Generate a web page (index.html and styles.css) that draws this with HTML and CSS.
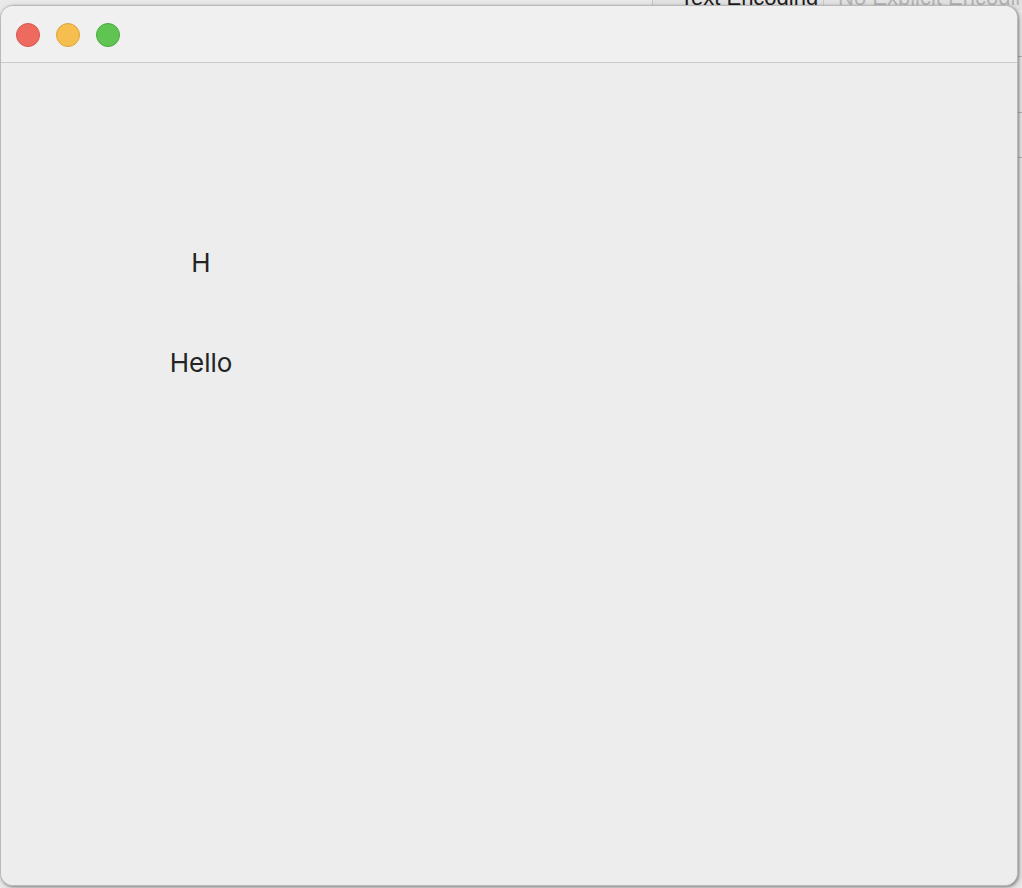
FILE: index.html
```html
<!DOCTYPE html>
<html>
<head>
<meta charset="utf-8">
<link rel="stylesheet" href="styles.css">
</head>
<body>
<div class="desktop">
  <div class="back-window">
    <div class="back-header">
      <span class="back-key">Text Encoding</span>
      <span class="back-sep"></span>
      <span class="back-val">No Explicit Encoding</span>
    </div>
    <div class="back-row r1"></div>
    <div class="back-row r2"></div>
    <div class="back-row r3"></div>
  </div>
  <div class="window">
    <div class="titlebar">
      <span class="light red"></span>
      <span class="light yellow"></span>
      <span class="light green"></span>
    </div>
    <div class="content">
      <div class="column">
        <div class="label">H</div>
        <div class="label">Hello</div>
      </div>
    </div>
  </div>
</div>
</body>
</html>
```

FILE: styles.css
```css
html, body {
  margin: 0;
  padding: 0;
}
body {
  width: 1022px;
  height: 888px;
  overflow: hidden;
  background: #dcdcdc;
  font-family: Inter, "Liberation Sans", sans-serif;
}
.desktop {
  position: relative;
  width: 1022px;
  height: 888px;
  overflow: hidden;
  background: #e9e9e9;
}
.back-window {
  position: absolute;
  left: 652px;
  top: -14px;
  width: 370px;
  height: 300px;
  overflow: hidden;
  background: #ececec;
  border-left: 1px solid #c4c4c4;
}
.back-header {
  display: flex;
  align-items: center;
  height: 24px;
  padding-left: 27px;
  font-family: "Liberation Sans", Arial, sans-serif;
  font-size: 22px;
  white-space: nowrap;
  background: #e2e2e2;
}
.back-key {
  flex: none;
  color: #1e1e1e;
  width: 143px;
}
.back-sep {
  flex: none;
  width: 1px;
  height: 24px;
  background: #c8c8c8;
  margin-right: 14px;
}
.back-val {
  flex: none;
  color: #b4b4b4;
}
.back-row {
  height: 1px;
  background: #b8b8b8;
}
.back-row.r1 { margin-top: 46px; }
.back-row.r2 { margin-top: 55px; }
.back-row.r3 { margin-top: 44px; }
.window {
  position: absolute;
  left: 0;
  top: 5px;
  width: 1016px;
  height: 879px;
  border: 1px solid #b9b9b9;
  border-radius: 13px;
  background: #ecedec;
  overflow: hidden;
  box-shadow: 1px 1px 3px rgba(0,0,0,0.35), 2px 2px 6px rgba(0,0,0,0.15);
  display: flex;
  flex-direction: column;
}
.titlebar {
  flex: none;
  background: #eff0ef;
  border-bottom: 1px solid #cacaca;
  display: flex;
  align-items: center;
  gap: 16px;
  padding-left: 15px;
  box-sizing: border-box;
  height: 57px;
}
.light {
  width: 24px;
  height: 24px;
  border-radius: 50%;
  box-sizing: border-box;
  margin-top: 1px;
}
.red { background: #ee6a5f; border: 1px solid #d6564b; }
.yellow { background: #f6be4f; border: 1px solid #dda43b; }
.green { background: #5fc452; border: 1px solid #4aa83e; }
.content {
  flex: 1;
  background: #ecedec;
}
.column {
  width: 400px;
  display: flex;
  flex-direction: column;
  align-items: center;
  gap: 69px;
  padding-top: 184px;
}
.label {
  font-size: 26px;
  line-height: 31px;
  color: #242424;
}
```
